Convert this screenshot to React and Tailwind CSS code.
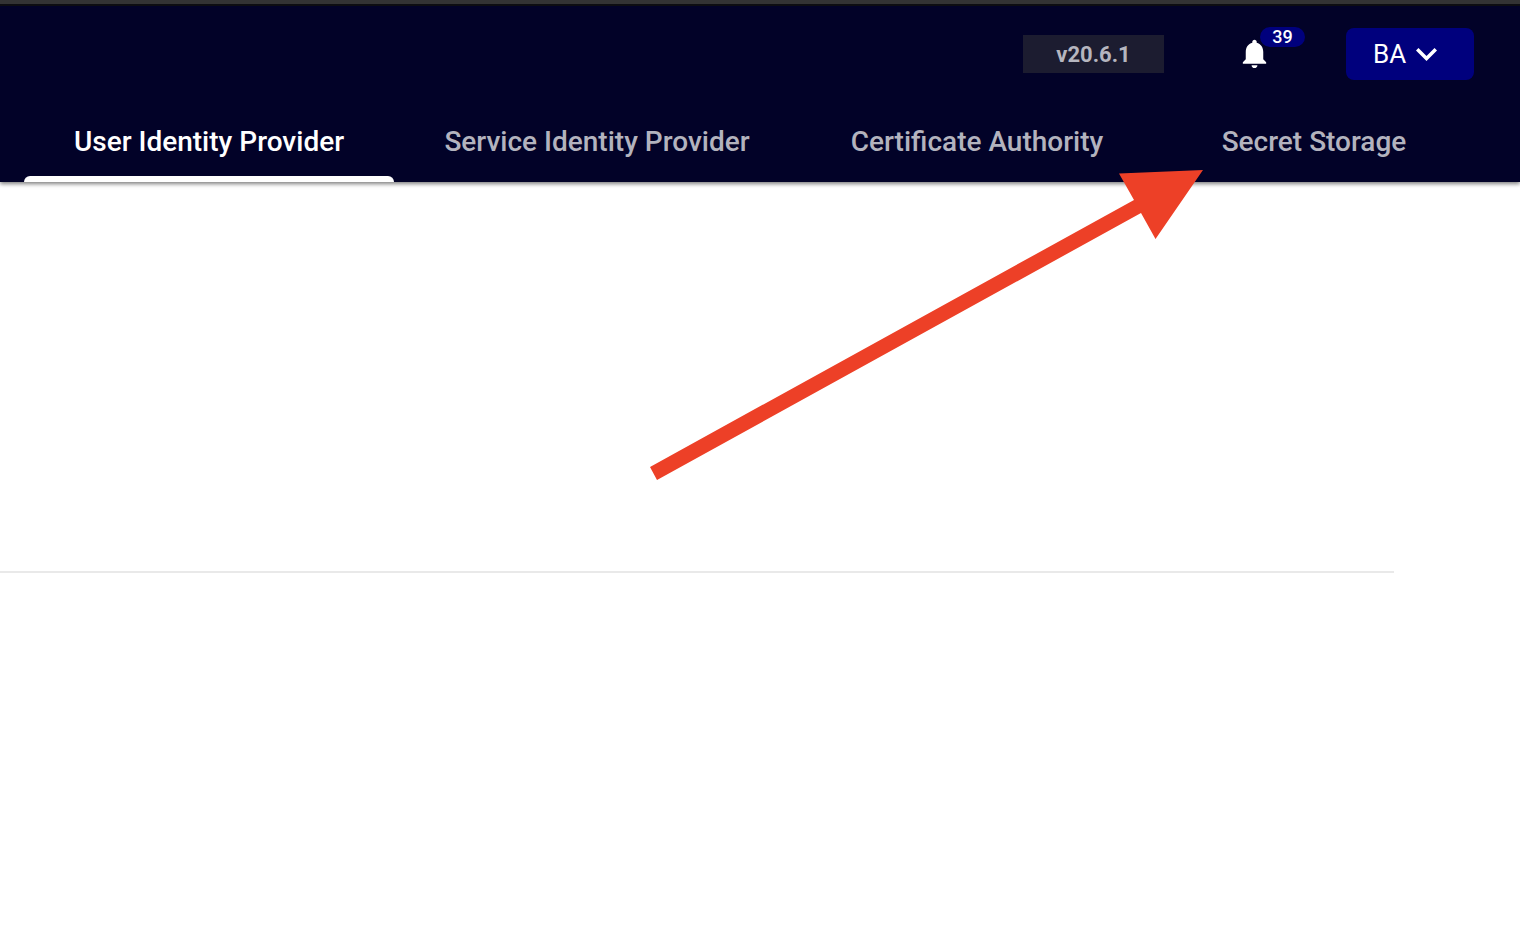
const tabs = [
  'User Identity Provider',
  'Service Identity Provider',
  'Certificate Authority',
  'Secret Storage',
];

function BellIcon() {
  return (
    <svg viewBox="0 0 24 24" className="size-[35px]" fill="currentColor" aria-hidden="true">
      <path d="M12 22c1.1 0 2-.9 2-2h-4c0 1.1.89 2 2 2zm6-6v-5c0-3.07-1.64-5.64-4.5-6.32V4c0-.83-.67-1.5-1.5-1.5s-1.5.67-1.5 1.5v.68C7.63 5.36 6 7.92 6 11v5l-2 2v1h16v-1l-2-2z" />
    </svg>
  );
}

function ChevronIcon() {
  return (
    <svg viewBox="6 8 12 8" className="h-[14px] w-[21px]" fill="currentColor" aria-hidden="true">
      <path d="M7.41 8.59 12 13.17l4.59-4.58L18 10l-6 6-6-6z" />
    </svg>
  );
}

function Header() {
  return (
    <header className="border-t-4 border-[#333334] bg-[#020228] shadow-[0_2px_4px_rgba(0,0,0,0.5)]">
      <div className="h-[2px] bg-[#0d0d12]" />
      <div className="flex h-24 items-center justify-end pr-[46px]">
        <span className="flex h-[38px] w-[141px] items-center justify-center bg-[#1c1c30] text-[22px] font-bold text-[#b5b5bf]">
          v20.6.1
        </span>
        <button
          type="button"
          aria-label="Notifications"
          className="relative mx-[73px] flex size-9 items-start text-white"
        >
          <BellIcon />
          <span className="absolute -top-[9px] left-[23px] flex h-5 w-[45px] items-center justify-center rounded-full bg-[#00007d] text-[18px] leading-5 font-medium">
            39
          </span>
        </button>
        <button
          type="button"
          aria-haspopup="menu"
          className="flex h-[52px] w-32 items-center gap-[10px] rounded-lg bg-[#00007d] pl-[27px] text-[26px] text-white"
        >
          BA
          <ChevronIcon />
        </button>
      </div>
      <nav className="mr-[46px] ml-6 grid h-20 grid-cols-[370fr_406fr_354fr_320fr]">
        {tabs.map((label, i) => (
          <a
            key={label}
            href="#"
            aria-current={i === 0 ? 'page' : undefined}
            className={
              'flex flex-col whitespace-nowrap text-center text-[28px] leading-[80px] font-medium ' +
              (i === 0 ? 'text-white' : 'text-[#b3b3be]')
            }
          >
            <span className="h-[74px]">{label}</span>
            {i === 0 && <span className="h-[6px] rounded-t-md bg-white" />}
          </a>
        ))}
      </nav>
    </header>
  );
}

export default function App() {
  return (
    <div className="relative min-h-screen bg-white font-['Roboto',sans-serif]">
      <Header />
      <main className="pt-[389px] pr-[126px]">
        <hr className="border-t-2 border-[#e9e9e9]" />
      </main>
      <svg
        viewBox="0 0 554 310"
        className="pointer-events-none absolute top-[170px] left-[650px] h-[310px] w-[554px]"
        aria-hidden="true"
      >
        <path d="M0 297 484 30 469 3.500 553 0 505.500 69 491 43 7 310Z" fill="#ed4027" />
      </svg>
    </div>
  );
}
